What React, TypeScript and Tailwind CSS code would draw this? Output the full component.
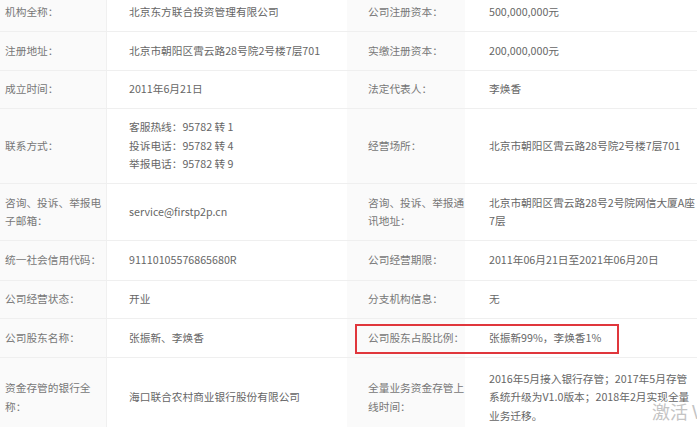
import React from 'react';

type Cell = React.ReactNode;

interface Row {
  h: string;
  l1: Cell;
  v1: Cell;
  l2: Cell;
  v2: Cell;
}

const rows: Row[] = [
  { h: 'h-[38px]', l1: '机构全称：', v1: '北京东方联合投资管理有限公司', l2: '公司注册资本：', v2: '500,000,000元' },
  { h: 'h-[39px]', l1: '注册地址：', v1: '北京市朝阳区霄云路28号院2号楼7层701', l2: '实缴注册资本：', v2: '200,000,000元' },
  { h: 'h-[38px]', l1: '成立时间：', v1: '2011年6月21日', l2: '法定代表人：', v2: '李焕香' },
  {
    h: 'h-[75px]',
    l1: '联系方式：',
    v1: (
      <>
        <div>客服热线：95782 转 1</div>
        <div>投诉电话：95782 转 4</div>
        <div>举报电话：95782 转 9</div>
      </>
    ),
    l2: '经营场所：',
    v2: '北京市朝阳区霄云路28号院2号楼7层701',
  },
  {
    h: 'h-[57px]',
    l1: (
      <>
        <div>咨询、投诉、举报电</div>
        <div>子邮箱：</div>
      </>
    ),
    v1: 'service@firstp2p.cn',
    l2: (
      <>
        <div>咨询、投诉、举报通</div>
        <div>讯地址：</div>
      </>
    ),
    v2: (
      <>
        <div className="whitespace-nowrap">北京市朝阳区霄云路28号2号院网信大厦A座</div>
        <div>7层</div>
      </>
    ),
  },
  { h: 'h-[40px]', l1: '统一社会信用代码：', v1: '91110105576865680R', l2: '公司经营期限：', v2: '2011年06月21日至2021年06月20日' },
  { h: 'h-[38px]', l1: '公司经营状态：', v1: '开业', l2: '分支机构信息：', v2: '无' },
  { h: 'h-[39px]', l1: '公司股东名称：', v1: '张振新、李焕香', l2: '公司股东占股比例：', v2: '张振新99%，李焕香1%' },
  {
    h: 'h-[80px]',
    l1: (
      <>
        <div>资金存管的银行全</div>
        <div>称：</div>
      </>
    ),
    v1: '海口联合农村商业银行股份有限公司',
    l2: (
      <>
        <div>全量业务资金存管上</div>
        <div>线时间：</div>
      </>
    ),
    v2: (
      <>
        <div className="whitespace-nowrap">2016年5月接入银行存管；2017年5月存管</div>
        <div className="whitespace-nowrap">系统升级为V1.0版本；2018年2月实现全量</div>
        <div>业务迁移。</div>
      </>
    ),
  },
];

const InfoRow: React.FC<{ row: Row }> = ({ row }) => (
  <div className={`flex ${row.h} border-b border-[#efefef]`}>
    <div className="w-[107px] shrink-0 flex flex-col justify-center pl-[5px] bg-[#fafafa] border-r border-[#f0f0f0] text-[#777]">
      {row.l1}
    </div>
    <div className="w-[240px] shrink-0 flex flex-col justify-center pl-[22px] text-[#666]">{row.v1}</div>
    <div className="w-[118px] shrink-0 flex flex-col justify-center pl-[21px] bg-[#fafafa] text-[#777]">
      {row.l2}
    </div>
    <div className="flex-1 min-w-0 flex flex-col justify-center pl-[24px] text-[#666] overflow-hidden">{row.v2}</div>
  </div>
);

export default function App() {
  return (
    <div
      className="relative w-[697px] h-[427px] overflow-hidden bg-white text-[10.7px] leading-[18.5px]"
      style={{ fontFamily: '"Noto Sans CJK SC", "Noto Sans", sans-serif' }}
    >
      <div className="-mt-[6px]">
        {rows.map((row, i) => (
          <InfoRow key={i} row={row} />
        ))}
      </div>
      <div className="absolute left-[355px] top-[324px] w-[264px] h-[30px] border-2 border-[#e0363c]" />
      <div className="absolute left-[652px] top-[400px] text-[18px] leading-[22px] text-[#c4c4c4] whitespace-nowrap">
        激活 V
      </div>
    </div>
  );
}
